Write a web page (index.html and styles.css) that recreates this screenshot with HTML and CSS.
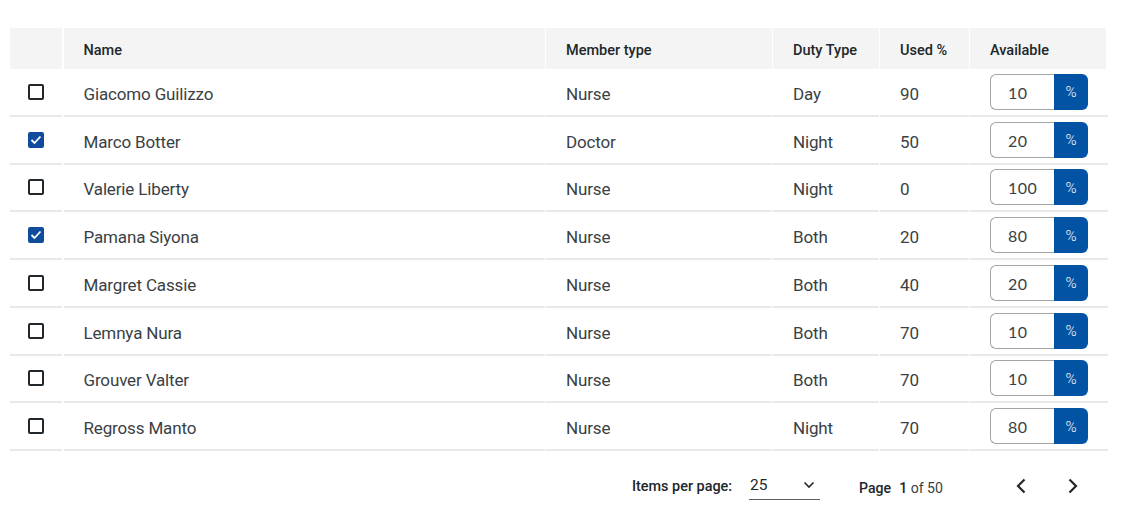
FILE: index.html
```html
<!DOCTYPE html>
<html lang="en">
<head>
    <meta charset="UTF-8">
    <title>Members</title>
    <link rel="stylesheet" href="styles.css">
</head>
<body>
    <main class="page">
        <div class="row head">
            <div class="cell"></div>
            <div class="cell">Name</div>
            <div class="cell">Member type</div>
            <div class="cell">Duty Type</div>
            <div class="cell">Used %</div>
            <div class="cell">Available</div>
        </div>
        <div id="rows"></div>

        <footer class="pager">
            <span class="pager-label">Items per page:</span>
            <div class="pager-select">
                <span>25</span>
                <svg width="12" height="8" viewBox="0 0 12 8"><path d="M1.500 1.500 6 6l4.500-4.500" fill="none" stroke="#21272a" stroke-width="1.600"/></svg>
            </div>
            <span class="pager-page"><span class="page-word">Page</span><b>1</b> of 50</span>
            <button class="pager-btn prev"><svg width="12" height="16" viewBox="0 0 12 16"><path d="M9.500 1.500 3 8l6.500 6.500" fill="none" stroke="#21272a" stroke-width="2.200"/></svg></button>
            <button class="pager-btn"><svg width="12" height="16" viewBox="0 0 12 16"><path d="M2.500 1.500 9 8l-6.500 6.500" fill="none" stroke="#21272a" stroke-width="2.200"/></svg></button>
        </footer>
    </main>

    <script>
        // Table data
        const members = [
            { name: "Giacomo Guilizzo", type: "Nurse", duty: "Day", used: 90, available: 10, checked: false },
            { name: "Marco Botter", type: "Doctor", duty: "Night", used: 50, available: 20, checked: true },
            { name: "Valerie Liberty", type: "Nurse", duty: "Night", used: 0, available: 100, checked: false },
            { name: "Pamana Siyona", type: "Nurse", duty: "Both", used: 20, available: 80, checked: true },
            { name: "Margret Cassie", type: "Nurse", duty: "Both", used: 40, available: 20, checked: false },
            { name: "Lemnya Nura", type: "Nurse", duty: "Both", used: 70, available: 10, checked: false },
            { name: "Grouver Valter", type: "Nurse", duty: "Both", used: 70, available: 10, checked: false },
            { name: "Regross Manto", type: "Nurse", duty: "Night", used: 70, available: 80, checked: false }
        ];

        const tick = '<svg width="12" height="10" viewBox="0 0 12 10"><path d="M1.500 5 4.500 8l6-6.500" fill="none" stroke="#fff" stroke-width="1.800"/></svg>';

        document.getElementById('rows').innerHTML = members.map(m => `
            <div class="row">
                <div class="cell"><span class="check ${m.checked ? 'checked' : ''}">${m.checked ? tick : ''}</span></div>
                <div class="cell">${m.name}</div>
                <div class="cell">${m.type}</div>
                <div class="cell">${m.duty}</div>
                <div class="cell">${m.used}</div>
                <div class="cell">
                    <div class="percent">
                        <span class="percent-value">${m.available}</span>
                        <span class="percent-unit">%</span>
                    </div>
                </div>
            </div>
        `).join('');
    </script>
</body>
</html>
```

FILE: styles.css
```css
* {
    margin: 0;
    padding: 0;
    box-sizing: border-box;
    font-family: 'Roboto', 'Liberation Sans', sans-serif;
}

body {
    background: #ffffff;
    color: #21272a;
}

.page {
    padding: 28px 18px 0 10px;
}

.row {
    display: grid;
    grid-template-columns: 52px 481px 225.500px 105.500px 88.500px 138px;
    column-gap: 1.500px;
    height: 47.750px;
    font-size: 17px;
    letter-spacing: -0.150px;
}

.row .cell {
    display: flex;
    align-items: center;
    padding: 4px 0 0 20px;
    border-bottom: 2px solid #e9e9e9;
    color: #3a3f44;
}

.row .cell:first-child {
    padding: 0 0 0 18px;
}

.row .cell:last-child {
    padding-top: 0;
}

.head {
    height: 41px;
    font-size: 14.500px;
    font-weight: 500;
    letter-spacing: 0;
    grid-template-columns: 52px 481px 225.500px 105.500px 88.500px 136px;
}

.row.head .cell {
    background: #f4f4f4;
    border-bottom: 0;
    color: #21272a;
    padding-top: 3px;
}

.check {
    width: 16px;
    height: 16px;
    border: 2px solid #21272a;
    border-radius: 2px;
    display: flex;
    align-items: center;
    justify-content: center;
}

.check.checked {
    background: #0f4c9c;
    border-color: #0f4c9c;
}

.percent {
    display: flex;
    width: 98px;
    height: 36px;
}

.percent-value {
    flex: 1;
    border: 1.500px solid #a4a4a4;
    border-right: 0;
    border-radius: 6px 0 0 6px;
    padding: 1px 0 0 17px;
    display: flex;
    align-items: center;
    font-family: 'Lato', sans-serif;
    font-size: 16px;
    letter-spacing: 0.500px;
}

.percent-unit {
    width: 34px;
    background: #0353a4;
    color: #ffffff;
    border-radius: 0 6px 6px 0;
    padding-top: 1px;
    display: flex;
    align-items: center;
    justify-content: center;
    font-size: 15px;
    font-weight: 300;
    letter-spacing: 0;
}

.pager {
    display: flex;
    align-items: center;
    height: 72px;
    padding-left: 622px;
    font-size: 14.400px;
}

.pager-label {
    font-weight: 500;
    margin: 0 17px 2px 0;
}

.pager-select {
    width: 71px;
    height: 28px;
    display: flex;
    align-items: center;
    justify-content: space-between;
    padding: 0 5px 2px 1px;
    border-bottom: 1px solid #5a5f63;
    margin-top: -2px;
    font-size: 15.500px;
}

.pager-page {
    margin: 2px 0 0 39px;
    font-size: 14.100px;
    color: #3a3f44;
}

.page-word {
    font-weight: 500;
    color: #21272a;
    margin-right: 8px;
}

.pager-page b {
    font-weight: 500;
    color: #21272a;
}

.pager-btn {
    border: 0;
    background: none;
    display: flex;
    margin: 0 0 2px 40px;
}

.pager-btn.prev {
    margin-left: 72px;
}
```
